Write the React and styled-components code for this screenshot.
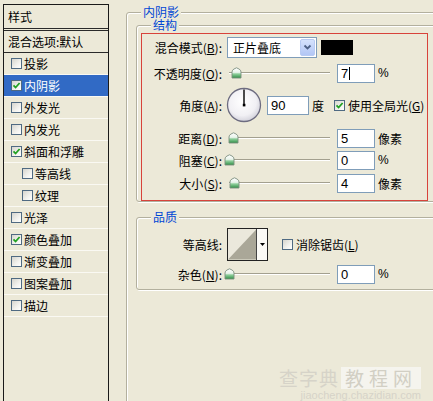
import React from "react"
import styled, { createGlobalStyle } from "styled-components"

const GlobalStyle = createGlobalStyle`
  html, body {
    margin: 0;
    padding: 0;
    background: #ece9d8;
    overflow: hidden;
  }
  body {
    font-family: "Noto Sans CJK SC", "Liberation Sans", sans-serif;
    font-size: 12px;
    color: #000;
  }
`

const Page = styled.div`
  position: relative;
  display: flex;
  width: 433px;
  height: 401px;
  overflow: hidden;
`

const StyleList = styled.div`
  flex-shrink: 0;
  box-sizing: border-box;
  width: 106px;
  height: 420px;
  margin: 4px 0 0 3px;
  border-left: 1px solid #1a1a1a;
  border-right: 1px solid #1a1a1a;
  display: flex;
  flex-direction: column;
`

const ListHeader = styled.div`
  height: 23px;
  line-height: 23px;
  padding-left: 4px;
  border-top: 1px solid #1a1a1a;
  border-bottom: 3px double #2a2a2a;
`

const BlendRow = styled.div`
  height: 21px;
  line-height: 21px;
  padding-left: 4px;
  border-bottom: 1px solid #2a2a2a;
`

const Item = styled.div`
  display: flex;
  align-items: center;
  gap: 2px;
  height: 21px;
  padding-left: ${p => (p.$indent ? 18 : 7)}px;
  border-bottom: 1px solid #faf9f3;
  background: ${p => (p.$selected ? "#316ac5" : "transparent")};
  color: ${p => (p.$selected ? "#fff" : "#000")};
`

const Box = styled.span`
  flex-shrink: 0;
  display: inline-flex;
  align-items: center;
  justify-content: center;
  box-sizing: border-box;
  width: 11px;
  height: 11px;
  border: 1px solid #4f6a82;
  background: linear-gradient(135deg, #d6d5ce 0%, #f2f2ee 60%, #fff 100%);
`

const Main = styled.div`
  margin-left: 17px;
  flex-shrink: 0;
`

const Group = styled.fieldset`
  box-sizing: border-box;
  margin: ${p => p.$mt || 0}px 0 0 0;
  padding: ${p => p.$pt || 0}px 0 ${p => p.$pb || 0}px ${p => p.$pl || 0}px;
  width: ${p => p.$w}px;
  height: ${p => (p.$h ? `${p.$h}px` : "auto")};
  min-width: 0;
  border: 1px solid #b3b09e;
  border-radius: 3px;
  box-shadow: inset 1px 1px 0 #fff, 1px 1px 0 #fff;
`

const Legend = styled.legend`
  margin-left: ${p => p.$ml}px;
  padding: 0 2px;
  line-height: ${p => p.$lh || 14}px;
  color: #0046d5;
  background: #ece9d8;
`

const RedFrame = styled.div`
  box-sizing: border-box;
  width: 287px;
  margin-top: 2px;
  padding-bottom: 7px;
  border: 1px solid #d8433b;
`

const Row = styled.div`
  display: flex;
  align-items: center;
  height: ${p => p.$h}px;
  margin-top: ${p => p.$mt}px;
`

const Label = styled.span`
  width: 80px;
  text-align: right;
  white-space: nowrap;

  & u {
    text-decoration: underline;
    text-underline-offset: 1px;
  }
`

const Select = styled.div`
  display: flex;
  align-items: center;
  box-sizing: border-box;
  width: 90px;
  height: 21px;
  margin-left: 5px;
  padding: 1px;
  border: 1px solid #7f9db9;
  background: #fff;
`

const SelectText = styled.span`
  flex: 1;
  padding-left: 4px;
`

const DropButton = styled.span`
  display: flex;
  align-items: center;
  justify-content: center;
  box-sizing: border-box;
  width: 15px;
  height: 17px;
  border: 1px solid #b8cbf3;
  border-radius: 2px;
  background: linear-gradient(#d5e2fc, #b2c6f5);
`

const Swatch = styled.span`
  width: 32px;
  height: 15px;
  margin-left: 4px;
  background: #000;
`

const Slider = styled.div`
  position: relative;
  width: 106px;
  height: 20px;
  margin-left: 2px;

  &::before {
    content: "";
    position: absolute;
    left: 5px;
    right: 0;
    top: 9px;
    height: 1px;
    background: #a3a08f;
    border-bottom: 1px solid #fff;
  }
`

const Thumb = styled.svg`
  position: absolute;
  top: 4px;
`

const NumInput = styled.div`
  box-sizing: border-box;
  width: ${p => p.$w || 38}px;
  height: 19px;
  margin-left: ${p => p.$ml || 7}px;
  padding-left: 3px;
  border: 1px solid #7f9db9;
  background: #fff;
  font-family: "Liberation Sans", Arial, sans-serif;
  font-size: 13px;
  line-height: 17px;
`

const Caret = styled.span`
  display: inline-block;
  width: 1px;
  height: 13px;
  margin-left: 1px;
  vertical-align: -2px;
  background: #000;
`

const Unit = styled.span`
  margin-left: ${p => p.$ml || 3}px;
  font-family: ${p => (p.$latin ? '"Liberation Sans", Arial, sans-serif' : "inherit")};
`

const Dial = styled.svg`
  margin-left: 4px;
`

const CheckLabel = styled.span`
  display: flex;
  align-items: center;
  gap: 3px;
  margin-left: ${p => p.$ml}px;
`

const Contour = styled.div`
  display: flex;
  box-sizing: border-box;
  width: 41px;
  height: 33px;
  margin-left: 5px;
  border: 1px solid #222;
`

const ContourArrow = styled.span`
  display: flex;
  align-items: center;
  justify-content: center;
  width: 10px;
  border-left: 1px solid #444;
  background: #fbfaf6;
`

const Watermark = styled.div`
  position: absolute;
  right: 12px;
  bottom: 0;
  display: flex;
  flex-direction: column;
  align-items: flex-end;
  color: #d6d3c8;
  pointer-events: none;
`

const MarkTop = styled.div`
  display: flex;
  align-items: center;
  gap: 2px;
  font-size: 19px;
  line-height: 22px;
  letter-spacing: 1px;
`

const MarkBox = styled.span`
  padding: 0 4px;
  background: #f5f4ee;
  color: #d2cfc4;
  letter-spacing: 5px;
`

const MarkUrl = styled.div`
  font-family: "Liberation Sans", Arial, sans-serif;
  font-size: 11px;
  line-height: 12px;
`

const Check = ({ checked }) => (
  <Box>
    {checked && (
      <svg width="9" height="9" viewBox="0 0 9 9">
        <path d="M1.5 4.3 L3.6 6.5 L7.6 2" fill="none" stroke="#21a121" strokeWidth="1.8" />
      </svg>
    )}
  </Box>
)

const SliderThumb = ({ pos }) => (
  <Thumb width="11" height="12" viewBox="0 0 11 12" style={{ left: pos }}>
    <defs>
      <linearGradient id="tg" x1="0" y1="0" x2="0" y2="1">
        <stop offset="0" stopColor="#ffffff" />
        <stop offset="0.45" stopColor="#e8f3ea" />
        <stop offset="0.6" stopColor="#8fcf9c" />
        <stop offset="1" stopColor="#2f8f45" />
      </linearGradient>
    </defs>
    <path d="M1 5 Q1 3 3 2 L5.5 0.8 L8 2 Q10 3 10 5 V11 H1 Z" fill="url(#tg)" stroke="#7d8f80" strokeWidth="0.9" />
  </Thumb>
)

const styles = [
  { name: "投影" },
  { name: "内阴影", checked: true, selected: true },
  { name: "外发光" },
  { name: "内发光" },
  { name: "斜面和浮雕", checked: true },
  { name: "等高线", indent: true },
  { name: "纹理", indent: true },
  { name: "光泽" },
  { name: "颜色叠加", checked: true },
  { name: "渐变叠加" },
  { name: "图案叠加" },
  { name: "描边" },
]

const sliders = [
  { label: "距离", key: "D", pos: 4, value: "5", unit: "像素", mt: 5 },
  { label: "阻塞", key: "C", pos: 0, value: "0", unit: "%", mt: 2 },
  { label: "大小", key: "S", pos: 5, value: "4", unit: "像素", mt: 3 },
]

export default function App() {
  return (
    <>
      <GlobalStyle />
      <Page>
        <StyleList>
          <ListHeader>样式</ListHeader>
          <BlendRow>混合选项:默认</BlendRow>
          {styles.map(s => (
            <Item key={s.name} $selected={s.selected} $indent={s.indent}>
              <Check checked={s.checked} />
              {s.name}
            </Item>
          ))}
        </StyleList>

        <Main>
          <Group $w={326} $h={430} $mt={6} $pt={1} $pl={9}>
            <Legend $ml={5} $lh={12}>内阴影</Legend>

            <Group $w={304} $pl={4} $pb={0}>
              <Legend $ml={10} $lh={12}>结构</Legend>
              <RedFrame>
                <Row $h={21} $mt={3}>
                  <Label>混合模式(<u>B</u>):</Label>
                  <Select>
                    <SelectText>正片叠底</SelectText>
                    <DropButton>
                      <svg width="9" height="7" viewBox="0 0 9 7">
                        <path d="M1.5 1.5 L4.5 4.5 L7.5 1.5" fill="none" stroke="#4d6185" strokeWidth="1.8" />
                      </svg>
                    </DropButton>
                  </Select>
                  <Swatch />
                </Row>

                <Row $h={20} $mt={5}>
                  <Label>不透明度(<u>O</u>):</Label>
                  <Slider>
                    <SliderThumb pos={7} />
                  </Slider>
                  <NumInput>
                    7<Caret />
                  </NumInput>
                  <Unit $latin>%</Unit>
                </Row>

                <Row $h={36} $mt={4}>
                  <Label>角度(<u>A</u>):</Label>
                  <Dial width="36" height="36" viewBox="0 0 36 36">
                    <defs>
                      <radialGradient id="dg" cx="0.45" cy="0.4" r="0.6">
                        <stop offset="0" stopColor="#ffffff" />
                        <stop offset="0.7" stopColor="#f1f0f4" />
                        <stop offset="1" stopColor="#d4d3dc" />
                      </radialGradient>
                    </defs>
                    <circle cx="18" cy="18" r="16.5" fill="url(#dg)" stroke="#6d6c80" strokeWidth="1.3" />
                    <line x1="18" y1="18" x2="18" y2="2.5" stroke="#000" strokeWidth="1.4" />
                    <rect x="16.8" y="16.8" width="2.6" height="2.6" fill="#000" />
                  </Dial>
                  <NumInput $w={42} $ml={5}>90</NumInput>
                  <Unit $ml={3}>度</Unit>
                  <CheckLabel $ml={10}>
                    <Check checked />
                    <span>
                      使用全局光(<u>G</u>)
                    </span>
                  </CheckLabel>
                </Row>

                {sliders.map(s => (
                  <Row key={s.key} $h={20} $mt={s.mt}>
                    <Label>
                      {s.label}(<u>{s.key}</u>):
                    </Label>
                    <Slider>
                      <SliderThumb pos={s.pos} />
                    </Slider>
                    <NumInput>{s.value}</NumInput>
                    <Unit $latin={s.unit === "%"}>{s.unit}</Unit>
                  </Row>
                ))}
              </RedFrame>
            </Group>

            <Group $w={304} $mt={8} $pl={5} $pb={5}>
              <Legend $ml={9}>品质</Legend>
              <Row $h={33} $mt={4}>
                <Label>等高线:</Label>
                <Contour>
                  <svg width="29" height="31" viewBox="0 0 29 31">
                    <rect width="29" height="31" fill="#ebe8dc" />
                    <polygon points="0,31 29,0 29,31" fill="#aaa798" />
                  </svg>
                  <ContourArrow>
                    <svg width="5" height="3" viewBox="0 0 5 3">
                      <polygon points="0,0 5,0 2.5,3" fill="#000" />
                    </svg>
                  </ContourArrow>
                </Contour>
                <CheckLabel $ml={14}>
                  <Check />
                  <span>
                    消除锯齿(<u>L</u>)
                  </span>
                </CheckLabel>
              </Row>
              <Row $h={20} $mt={3}>
                <Label>杂色(<u>N</u>):</Label>
                <Slider>
                  <SliderThumb pos={0} />
                </Slider>
                <NumInput>0</NumInput>
                <Unit $latin>%</Unit>
              </Row>
            </Group>
          </Group>
        </Main>

        <Watermark>
          <MarkTop>
            <span>查字典</span>
            <MarkBox>教程网</MarkBox>
          </MarkTop>
          <MarkUrl>jiaocheng.chazidian.com</MarkUrl>
        </Watermark>
      </Page>
    </>
  )
}
